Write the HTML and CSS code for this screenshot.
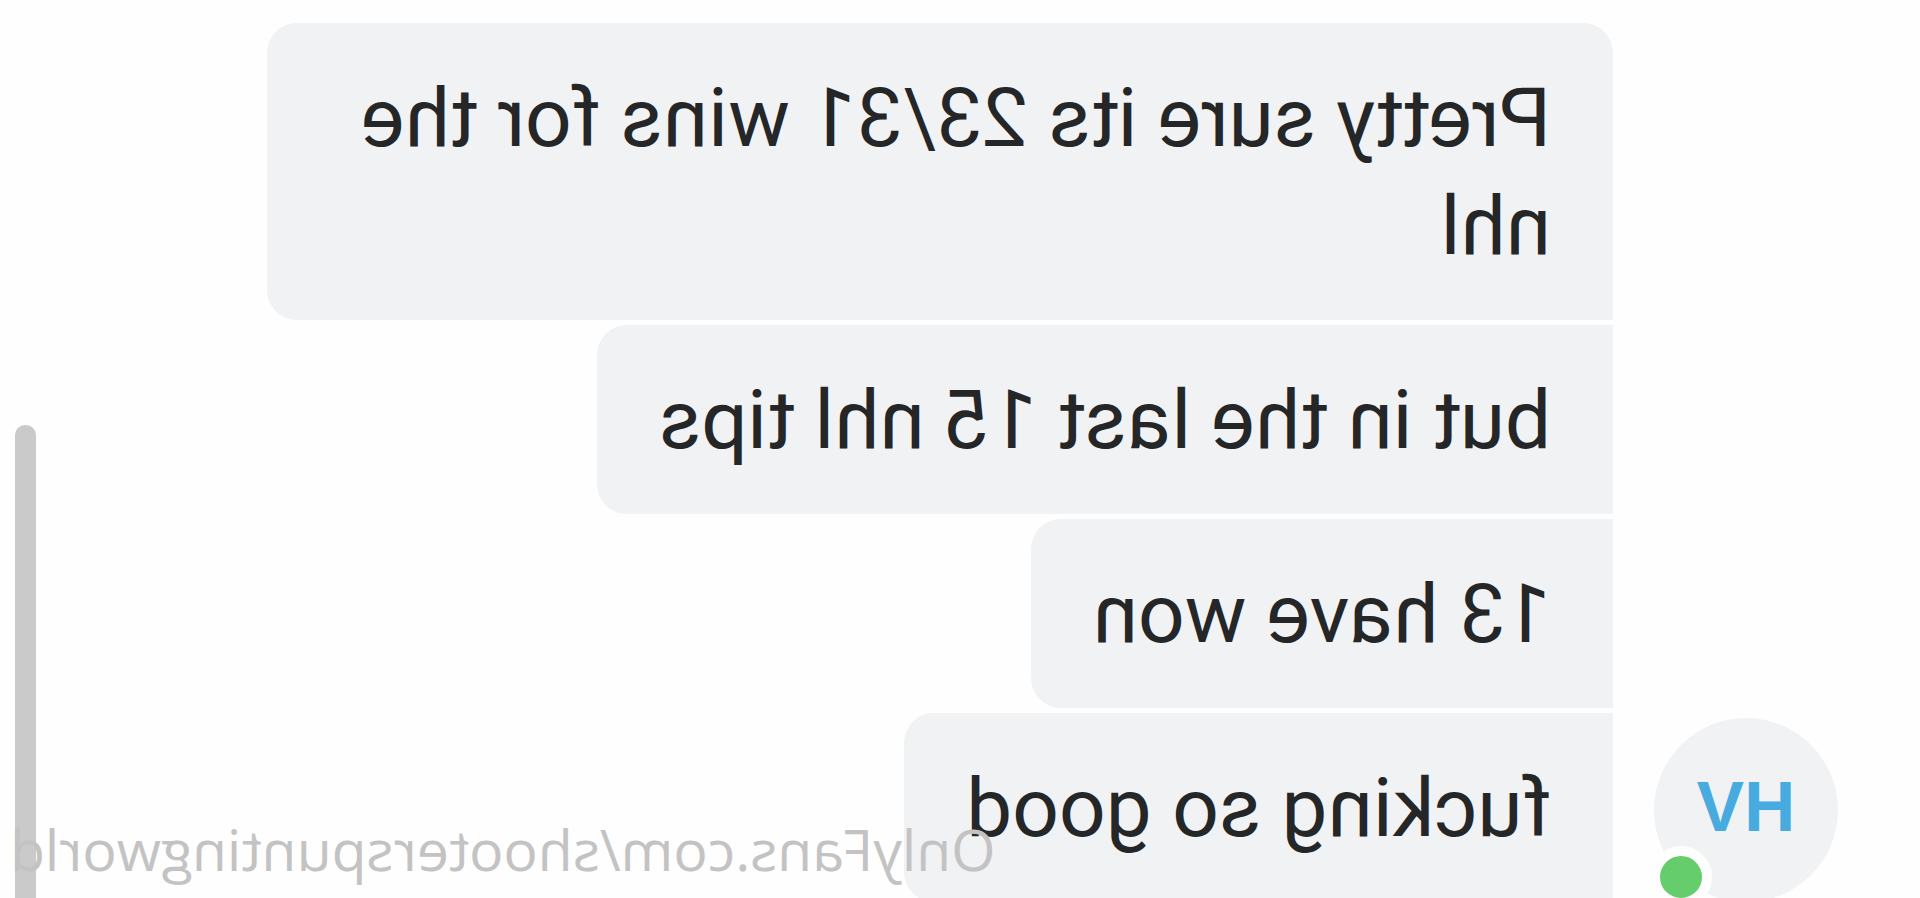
FILE: index.html
```html
<!DOCTYPE html>
<html lang="en">
<head>
<meta charset="utf-8">
<title>Chat</title>
<link rel="stylesheet" href="styles.css">
</head>
<body>
<main class="screen">
  <section class="group">
    <div class="avatar">
      <span class="initials">HV</span>
      <span class="status"></span>
    </div>
    <div class="messages">
      <p class="bubble">Pretty sure its 23/31 wins for the nhl</p>
      <p class="bubble">but in the last 15 nhl tips</p>
      <p class="bubble">13 have won</p>
      <p class="bubble">fucking so good</p>
    </div>
  </section>
  <div class="scrollbar"></div>
  <div class="watermark">OnlyFans.com/shooterspuntingworld</div>
</main>
</body>
</html>
```
FILE: styles.css
```css
body {
  margin: 0;
  background: #fefefe;
  font-family: Roboto, "Liberation Sans", sans-serif;
  color: #242628;
}

/* The whole view is flipped left to right */
.screen {
  position: relative;
  height: 100vh;
  overflow: hidden;
  transform: scaleX(-1);
}

.group {
  display: flex;
  align-items: flex-end;
  gap: 41px;
  padding: 23px 0 0 82px;
}

.avatar {
  position: relative;
  box-sizing: border-box;
  display: flex;
  flex: none;
  align-items: center;
  justify-content: center;
  width: 184px;
  height: 184px;
  padding-bottom: 8px;
  border-radius: 50%;
  background: #f1f2f4;
}

.initials {
  font: bold 71px/1 "Liberation Sans", Arial, sans-serif;
  color: #48abe0;
}

.status {
  position: absolute;
  right: -4px;
  bottom: -6px;
  width: 42px;
  height: 42px;
  border: 10px solid #fefefe;
  border-radius: 50%;
  background: #65cd6b;
}

.messages {
  display: flex;
  flex: 1;
  flex-direction: column;
  align-items: flex-start;
  gap: 5px;
}

.bubble {
  box-sizing: border-box;
  max-width: 1346px;
  margin: 0;
  padding: 41px 62px 40px;
  border-radius: 0 30px 30px 0;
  background: #f1f2f4;
  font-size: 82px;
  line-height: 108px;
}

.bubble:first-child {
  border-top-left-radius: 30px;
}

.scrollbar {
  position: absolute;
  top: 425px;
  right: 15px;
  bottom: -20px;
  width: 21px;
  border-radius: 10px;
  background: #cacaca;
}

.watermark {
  position: absolute;
  right: 10px;
  bottom: 9px;
  font-family: "Open Sans", sans-serif;
  font-size: 57px;
  line-height: 80px;
  white-space: nowrap;
  color: #c3c3c3;
}
```
